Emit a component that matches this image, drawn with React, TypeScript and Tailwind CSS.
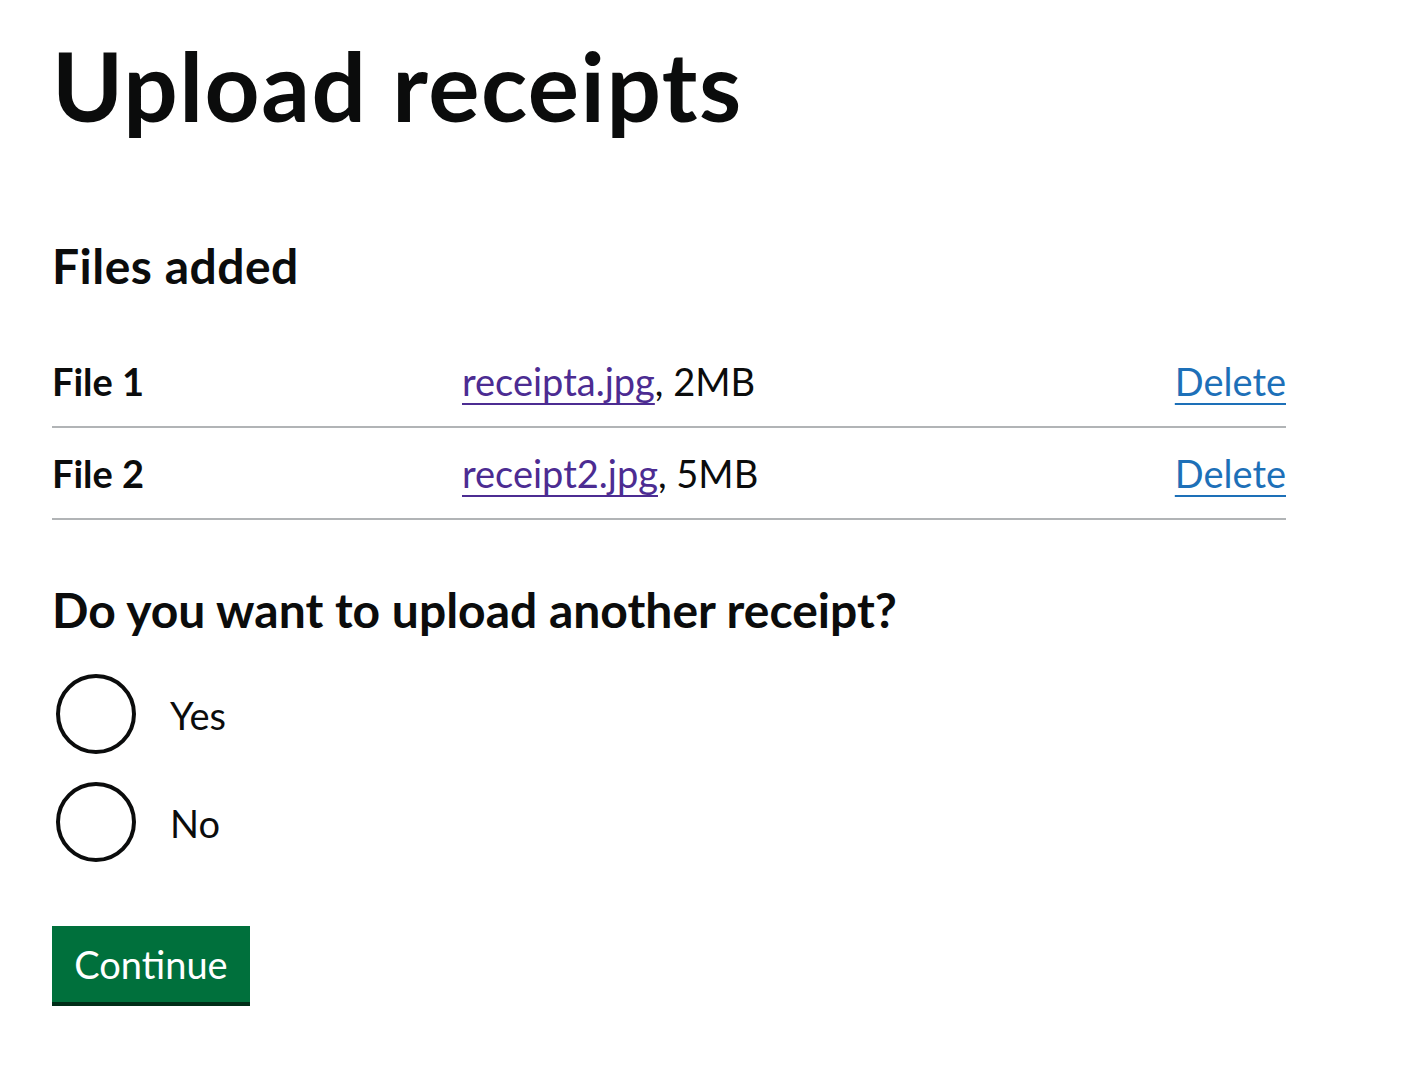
export default function App() {
  const files = [
    { key: 'File 1', name: 'receipta.jpg', size: '2MB' },
    { key: 'File 2', name: 'receipt2.jpg', size: '5MB' },
  ];

  return (
    <div className="min-h-screen bg-white pl-[52px] pt-[37px] text-[#0b0c0c] [font-family:Lato,'Noto_Sans',sans-serif]">
      <h1 className="mb-[103px] text-[96px] font-bold leading-[96px] tracking-[1.5px]">Upload receipts</h1>

      <h2 className="mb-[40px] text-[48px] font-bold leading-[60px] tracking-[0.5px]">Files added</h2>

      {/* summary list */}
      <dl className="mb-[60px] w-[1234px]">
        {files.map((f) => (
          <div key={f.key} className="flex border-b-2 border-[#b1b4b6] py-[20px] text-[38px] leading-[50px]">
            <dt className="w-[410px] font-bold">{f.key}</dt>
            <dd className="flex-1">
              <a href="#" className="text-[#4c2c92] underline decoration-2 underline-offset-[7px]">
                {f.name}
              </a>
              , {f.size}
            </dd>
            <dd className="text-right">
              <a href="#" className="text-[#1d70b8] underline decoration-2 underline-offset-[7px]">
                Delete
              </a>
            </dd>
          </div>
        ))}
      </dl>

      <fieldset className="mb-[60px]">
        <legend className="mb-[30px] text-[48px] font-bold leading-[60px]">
          Do you want to upload another receipt?
        </legend>
        <div className="flex flex-col gap-[20px]">
          {['Yes', 'No'].map((opt) => (
            <label key={opt} className="flex h-[88px] items-start">
              <span className="flex h-[88px] w-[88px] shrink-0 items-center justify-center">
                <span className="h-[80px] w-[80px] rounded-full border-4 border-[#0b0c0c]" />
              </span>
              <span className="pl-[30px] pt-[20px] text-[38px] leading-[50px]">{opt}</span>
            </label>
          ))}
        </div>
      </fieldset>

      <button className="h-[76px] w-[198px] bg-[#00703c] text-[38px] leading-none text-white shadow-[0_4px_0_#002d18]">
        Continue
      </button>
    </div>
  );
}
